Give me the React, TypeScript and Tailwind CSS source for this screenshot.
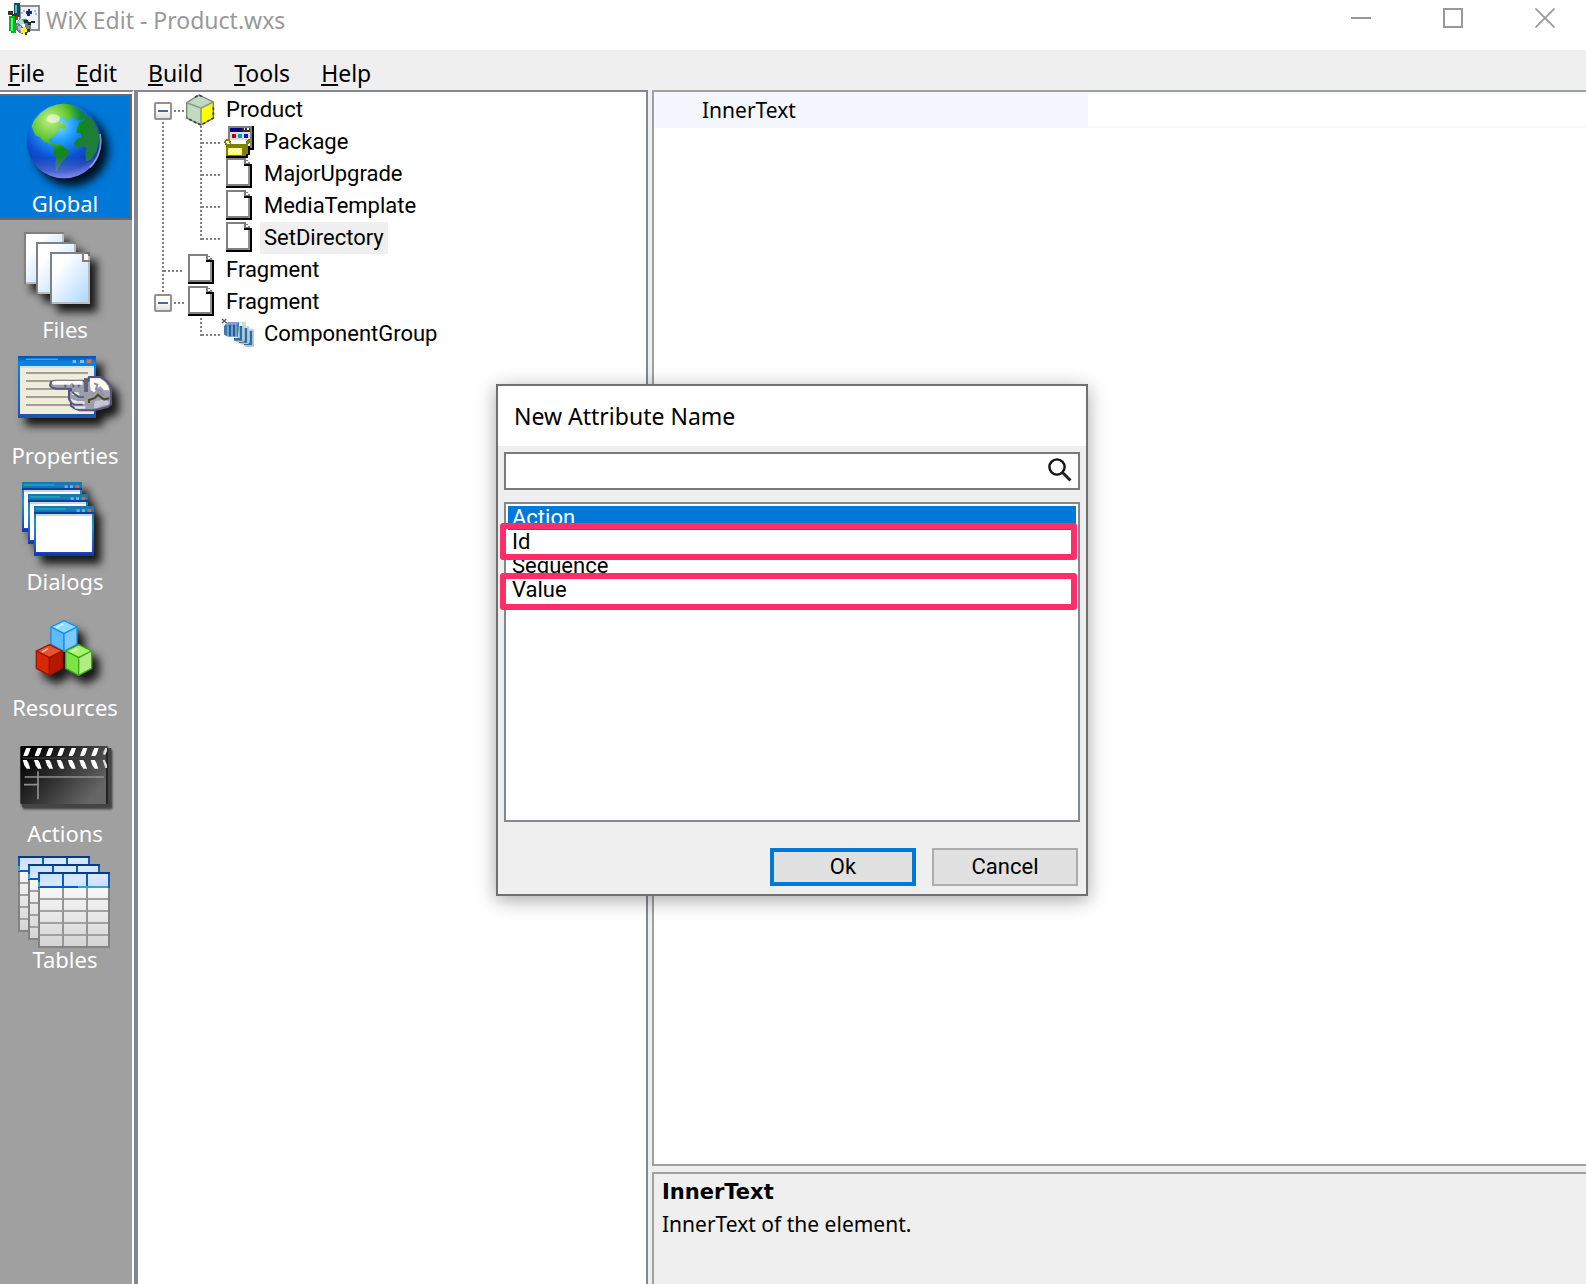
import React, { useState } from "react"

type IconProps = { className?: string }

type NavItem = {
  label: string
  Icon: React.ComponentType
}

type TreeNode = {
  label: string
  depth: number
  guide: "expander" | "tee" | "corner"
  // where the dotted line of the root level runs in this row
  rootLine: "none" | "top" | "bottom" | "full"
  Icon: React.ComponentType
}

/* ---------- title bar ---------- */

const AppLogo = () => (
  <svg viewBox="24 9 96 96" className="size-8 shrink-0" shapeRendering="crispEdges" aria-hidden="true">
    <rect x="57" y="14" width="63" height="80" fill="#8a8f96" />
    <rect x="63" y="20" width="50" height="68" fill="#f0f0f8" />
    <path d="M63 36h6v6h-6zM69 30h6v6h-6zM102 30h6v6h-6zM105 39h6v6h-6z" fill="#b4b4d8" />
    <path d="M78 33h5v-6h7v6h6v10h-6v5h-8v-5h-4z" fill="#10249c" />
    <path d="M42 9h19v42H42z" fill="#1c4a50" />
    <path d="M46 14h6v26h-6z" fill="#46c0d4" />
    <path d="M24 33h14v8h10v10H36v-7H24z" fill="#333" />
    <path d="M27 48h21v52H33v-6h-6z" fill="#06b424" />
    <path d="M32 54h6v40h-6z" fill="#48ff5c" />
    <path d="M46 48h8v12h-6v8h-4z" fill="#d81818" />
    <circle cx="70" cy="79" r="23" fill="#777b80" />
    <path d="M50 66l14-10 10 14-8 8z" fill="#7ef0dc" />
    <path d="M64 84l12-4 8 14-12 8-10-4z" fill="#f4f41e" />
    <path d="M52 76l12 2-2 14-8-4z" fill="#c9a2e8" />
    <rect x="66" y="72" width="9" height="9" fill="#fff" />
    <path d="M72 60h12v6h8v-4h12v6H92v8h-8v-6H72z" fill="#24282c" />
    <path d="M82 88h8v8h-8v8h-8v-8h8z" fill="#333" />
  </svg>
)

const MinimizeIcon = () => (
  <svg viewBox="0 0 20 20" className="size-5" shapeRendering="crispEdges" aria-hidden="true">
    <path d="M0 9h20v2H0z" fill="#999" />
  </svg>
)

const MaximizeIcon = () => (
  <svg viewBox="0 0 20 20" className="size-5" shapeRendering="crispEdges" aria-hidden="true">
    <rect x="1" y="1" width="18" height="18" fill="none" stroke="#999" strokeWidth="2" />
  </svg>
)

const CloseIcon = () => (
  <svg viewBox="0 0 20 20" className="size-5" aria-hidden="true">
    <path d="M.5.5l19 19M19.5.5l-19 19" stroke="#999" strokeWidth="1.7" />
  </svg>
)

/* ---------- sidebar icons ---------- */

const NAV_ICON = "block h-24 w-[130px]"
const SHADOW = "drop-shadow-[7px_8px_4px_rgba(0,0,0,0.85)]"

const GlobeIcon = () => (
  <svg viewBox="0 18 390 288" className={`${NAV_ICON} ${SHADOW}`} aria-hidden="true">
    <defs>
      <radialGradient id="sea" cx="0.42" cy="0.28" r="0.75">
        <stop offset="0" stopColor="#7fe0ff" />
        <stop offset="0.3" stopColor="#1f9dff" />
        <stop offset="0.62" stopColor="#0d4fd0" />
        <stop offset="0.85" stopColor="#1238ac" />
        <stop offset="1" stopColor="#5a72dc" />
      </radialGradient>
      <radialGradient id="land" gradientUnits="userSpaceOnUse" cx="150" cy="90" r="125">
        <stop offset="0" stopColor="#c4f08c" />
        <stop offset="0.45" stopColor="#62c830" />
        <stop offset="0.75" stopColor="#118a10" />
        <stop offset="1" stopColor="#1d7d3a" />
      </radialGradient>
      <linearGradient id="rim" x1="0" y1="0" x2="0" y2="1">
        <stop offset="0.72" stopColor="#6a7cf0" stopOpacity="0" />
        <stop offset="1" stopColor="#8c92f0" stopOpacity="0.8" />
      </linearGradient>
    </defs>
    <circle cx="192" cy="153" r="112" fill="url(#sea)" />
    <g fill="url(#land)">
      <path d="M95 108l8-18 18-20 22-16 26-10 20-3 22 2 10 8 2 18-14 20-12 2-10-10-10 6 8 14 12 4-2 12-14-2-12 14-10 12-12 6 4 10 14 6 8 8-10-2-16-8-16-6-12-14-12-4-8-16z" />
      <path d="M160 168l14-6 12 4 8 8 14 8-6 16-8 10-10 12-8 12-2 12h-6l-2-22 2-18-8-18z" />
      <path d="M196 44l32 8 22 14 8 14-14 12-20-4-8-18z" opacity="0.85" />
      <path d="M230 116l8-18 14-6 4-12 12-2 16 20 10 22 4 30-8 34-18 26-14 4-2-22 4-18-14-6-18 6-6-14 8-12 14-6-2-14-12 2z" />
    </g>
    <ellipse cx="160" cy="86" rx="20" ry="13" fill="#fff" opacity="0.55" />
    <circle cx="192" cy="153" r="112" fill="url(#rim)" />
    <path d="M270 232a112 112 0 0 0 30-100" fill="none" stroke="#b0a8dc" strokeWidth="5" opacity="0.8" />
  </svg>
)

const FilesIcon = () => (
  <svg viewBox="0 396 390 288" className={`${NAV_ICON} ${SHADOW}`} aria-hidden="true">
    <defs>
      <linearGradient id="sheet" x1="0" y1="0" x2="1" y2="1">
        <stop offset="0.25" stopColor="#fff" />
        <stop offset="1" stopColor="#acd6ff" />
      </linearGradient>
    </defs>
    {[
      [72, 426],
      [108, 456],
      [150, 486],
    ].map(([x, y]) => (
      <g key={x} transform={`translate(${x} ${y})`}>
        <path d="M3 3h114v150H3z" fill="url(#sheet)" stroke="#bcbcbc" strokeWidth="6" />
        <path d="M3 156V3h117" fill="none" stroke="#808080" strokeWidth="6" />
      </g>
    ))}
    <path d="M252 492h12v18h-12z" fill="#fff" />
    <path d="M249 486v27h21" fill="none" stroke="#808080" strokeWidth="6" />
    <path d="M258 486h12v12h-6v-6h-6z" fill="#707070" />
  </svg>
)

const PropertiesIcon = () => (
  <svg viewBox="0 24 390 288" className={`${NAV_ICON} ${SHADOW}`} aria-hidden="true">
    <defs>
      <linearGradient id="frame" x1="0" y1="0" x2="0" y2="1">
        <stop offset="0" stopColor="#0a50a8" />
        <stop offset="0.1" stopColor="#0a84e8" />
        <stop offset="0.7" stopColor="#0a68d0" />
        <stop offset="1" stopColor="#2450a8" />
      </linearGradient>
    </defs>
    <rect x="54" y="48" width="234" height="186" fill="url(#frame)" />
    <rect x="60" y="78" width="222" height="144" fill="#efecdc" />
    <path d="M60 78h222v6H60z" fill="#c6e4f4" />
    <path d="M78 56h96v4H78z" fill="#4aa8f0" />
    <path d="M218 60h10v9h-10zM240 60h12v9h-12z" fill="#7cc0f4" />
    <path d="M260 58h15v11h-15z" fill="#e4684c" />
    <path d="M78 99h186M78 123h186M78 147h186M78 171h186M78 195h186" stroke="#a3a093" strokeWidth="6" />
    <path
      d="M267 111h33l12 6 10 8 8 12 3 14v42l-10 8-24 6-18 4h-42l-14-5-12-8v-12l-6-8v-26h6v-6h-46l-12-4-5-6 3-10 14-4h99v-8z"
      fill="#9d9dac"
      stroke="#55557c"
      strokeWidth="6"
      strokeLinejoin="round"
    />
    <path d="M156 125l10-3h82v12h-26l-6-6-6 6h-48l-6-2z" fill="#fffef4" />
    <path d="M196 134v8M220 134v8M236 134v8" stroke="#55557c" strokeWidth="5" />
    <path d="M252 114h12v42h-12z" fill="#62627c" />
    <path d="M270 115h30l14 10 10 12 4 14h-16l-10-12-10 4-8 14-12-6-2-14z" fill="#fffef4" />
    <path d="M282 130l10 4-4 14 10 2M300 152l12 14" fill="none" stroke="#8c8ca0" strokeWidth="6" />
    <path d="M214 156h20l6 9h-24zM212 176l22 8h20v8h-36zM222 199h34v7h-30z" fill="#e6e6ec" />
    <path d="M216 156l20 15h16M210 186l14 8h24" fill="none" stroke="#55557c" strokeWidth="5" />
    <path d="M284 184l20-4 22 4v10l-16 2-20 8h-8z" fill="#c6c6d2" />
    <path d="M267 189v-9l18-6 9-10 9 8 9 6 16-3" fill="none" stroke="#4c4820" strokeWidth="6" />
  </svg>
)

const DialogsIcon = () => (
  <svg viewBox="0 402 390 288" className={`${NAV_ICON} ${SHADOW}`} aria-hidden="true">
    <defs>
      <linearGradient id="dlgside" x1="0" y1="0" x2="0" y2="1">
        <stop offset="0" stopColor="#1878a8" />
        <stop offset="0.4" stopColor="#2090d0" />
        <stop offset="1" stopColor="#2038c0" />
      </linearGradient>
    </defs>
    {[
      [66, 426],
      [84, 462],
      [102, 498],
    ].map(([x, y]) => (
      <g key={x} transform={`translate(${x} ${y})`}>
        <rect width="180" height="149" fill="url(#dlgside)" />
        <rect x="6" y="24" width="168" height="114" fill="#fff" />
        <path d="M6 24h120v6H6z" fill="#c4dcc4" />
        <path d="M126 24h48v6h-48z" fill="#c8d8ff" />
        <path d="M6 6h90v5H6z" fill="#18a0c8" />
        <path d="M0 17h180v7H0z" fill="#0840a8" />
        <path d="M128 10h9v8h-9zM144 10h9v8h-9z" fill="#68b4e0" />
        <path d="M160 9h12v9h-12z" fill="#e0603c" />
        <path d="M0 143h180v6H0z" fill="#103c98" />
      </g>
    ))}
  </svg>
)

type CubeProps = { x: number; y: number; top: string; left: string; right: string; edge: string }

const Cube = ({ x, y, top, left, right, edge }: CubeProps) => (
  <g transform={`translate(${x} ${y})`} stroke={edge} strokeWidth="4" strokeLinejoin="round">
    <path d="M41 2l39 19-39 20L2 21z" fill={top} />
    <path d="M2 21l39 20v53L2 73z" fill={left} />
    <path d="M80 21L41 41v53l39-21z" fill={right} />
  </g>
)

const ResourcesIcon = () => (
  <svg viewBox="0 0 390 288" className={`${NAV_ICON} ${SHADOW}`} aria-hidden="true">
    <Cube x={151} y={60} top="#8cdcff" left="#5cbcfc" right="#7cc8ff" edge="#1c8cec" />
    <Cube x={107} y={132} top="#e85030" left="#d82808" right="#b41800" edge="#9c1400" />
    <Cube x={195} y={132} top="#a4f46c" left="#7ce444" right="#b4ec84" edge="#40a41c" />
    <path d="M168 84l22-12M126 156l18-10M214 156l18-10" stroke="#fff" strokeWidth="5" opacity="0.6" />
  </svg>
)

const ActionsIcon = () => (
  <svg
    viewBox="0 378 390 288"
    className={`${NAV_ICON} drop-shadow-[1px_2px_1px_rgba(0,0,0,0.6)]`}
    aria-hidden="true"
  >
    <defs>
      <linearGradient id="slate" x1="0" y1="0" x2="1" y2="0.6">
        <stop offset="0.1" stopColor="#000" />
        <stop offset="1" stopColor="#666" />
      </linearGradient>
    </defs>
    <path d="M66 444h268v178H66z" fill="#444" />
    <rect x="61" y="438" width="263" height="174" rx="4" fill="url(#slate)" />
    <path d="M318 444h6v168h-6z" fill="#222" />
    <path d="M68 474h252" stroke="#444" strokeWidth="3" />
    {[72, 106, 140, 174, 208, 242, 276].map((x) => (
      <g key={x} fill="#fff">
        <path d={`M${x + 7} 444h13l-6 18-4 6h-12l3-10z`} />
        <path d={`M${x - 4} 480h12l5 8 6 18h-11l-7-10z`} />
      </g>
    ))}
    <path d="M316 444h5v10l-5 10h-6v-8zM308 480h6l7 14v10h-5z" fill="#ddd" />
    <path d="M74 531h238M72 554h42M114 514v84" stroke="#909090" strokeWidth="5" />
  </svg>
)

const TablesIcon = () => (
  <svg viewBox="0 96 390 288" className={NAV_ICON} shapeRendering="crispEdges" aria-hidden="true">
    <defs>
      <linearGradient id="cells" x1="0" y1="0" x2="0" y2="1">
        <stop offset="0" stopColor="#f8f8f8" />
        <stop offset="1" stopColor="#d4d4d4" />
      </linearGradient>
      <linearGradient id="head" x1="0" y1="0" x2="1" y2="1">
        <stop offset="0" stopColor="#c4dcff" />
        <stop offset="0.5" stopColor="#dce8ff" />
        <stop offset="1" stopColor="#c8dcff" />
      </linearGradient>
    </defs>
    {[
      [54, 108],
      [84, 132],
      [114, 156],
    ].map(([x, y]) => (
      <g key={x} transform={`translate(${x} ${y})`} fill="none" strokeWidth="6">
        <rect x="3" y="45" width="210" height="180" fill="url(#cells)" stroke="#828282" />
        <path d="M6 81h204M6 117h204M6 153h204M6 189h204" stroke="#a0a0a0" />
        <path d="M75 48v174M147 48v174" stroke="#969696" />
        <rect x="3" y="3" width="210" height="42" fill="url(#head)" stroke="#0a5cc0" />
        <path d="M75 3v42M147 3v42" stroke="#0a5cc0" />
        <path d="M0 3h216" stroke="#083c80" />
        <path d="M120 45h90M3 30v15" stroke="#3ca0cc" />
      </g>
    ))}
  </svg>
)

/* ---------- tree icons ---------- */

const TREE_ICON = "size-8 overflow-visible"

const ProductIcon = () => (
  <svg viewBox="0 0 96 96" className={TREE_ICON} aria-hidden="true">
    <path d="M42 3l43 21-37 18L5 26z" fill="#c0dcc0" />
    <path d="M5 26l43 16v51L5 72z" fill="#c0dcc0" />
    <path d="M48 42l37-18v48L48 93z" fill="#ff0" />
    <path d="M5 26L42 3l43 21v48L48 93 5 72z" fill="none" stroke="#808080" strokeWidth="4" />
    <path d="M5 26l43 16 37-18M48 42v51" fill="none" stroke="#8c9c8c" strokeWidth="5" />
    <path d="M30 10L42 3l12 6M85 40v32L48 93 5 72" fill="none" stroke="#404040" strokeWidth="5" strokeDasharray="9 6" />
  </svg>
)

const PackageIcon = () => (
  <svg viewBox="0 0 96 96" className={TREE_ICON} shapeRendering="crispEdges" aria-hidden="true">
    <path d="M15 0h78v72H15z" fill="#000" />
    <path d="M15 0h72v66H15z" fill="#808080" />
    <path d="M21 6h60v54H21z" fill="#fff" />
    <path d="M21 6h36v12H21z" fill="#000080" />
    <path d="M57 6h24v12H57z" fill="#303030" />
    <path d="M63 6h4v6h-4zM73 6h4v6h-4z" fill="#fff" />
    <path d="M21 18h60v24H21z" fill="#dcdcdc" />
    <path d="M27 24h12v12H27z" fill="#c00010" />
    <path d="M45 24h12v12H45z" fill="#00a0a0" />
    <path d="M63 24h12v12H63z" fill="#1010d0" />
    <path d="M3 48l6-9h10l5 9h44l8-9h6v9l-6 6-4 12H20L8 58z" fill="#808000" />
    <path d="M9 45h9v6l6 3h-9l-6-3z" fill="#ffffc0" />
    <path d="M24 48h45v6H24z" fill="#fff" />
    <path d="M9 60h66v30H9z" fill="#808000" />
    <path d="M15 66h42v21H15z" fill="#ffff50" />
    <path
      d="M21 66h6v6h-6zM33 66h6v6h-6zM45 66h6v6h-6zM15 72h6v6h-6zM27 72h6v6h-6zM39 72h6v6h-6zM51 72h6v6h-6zM21 78h6v6h-6zM33 78h6v6h-6zM45 78h6v6h-6z"
      fill="#fffff0"
    />
    <path d="M9 90h60v-6h6V60h6v28h-6v8H9z" fill="#000" />
  </svg>
)

const PageIcon = () => (
  <svg viewBox="0 0 96 96" className={TREE_ICON} shapeRendering="crispEdges" aria-hidden="true">
    <path d="M9 0h60v6h6v6h6v6h6v72H9z" fill="#000" />
    <path d="M9 0h60v6h6v6h6v72H9z" fill="#808080" />
    <path d="M15 6h48v18h18v54H15z" fill="#fff" />
    <path d="M75 24h6v60h-6z" fill="#909090" />
    <path d="M63 6h6v12h-6z" fill="#808080" />
    <path d="M63 18h18v6H63z" fill="#000" />
    <path d="M69 9h6v6h-6z" fill="#fff" />
  </svg>
)

const ComponentGroupIcon = () => (
  <svg viewBox="0 0 96 96" className={TREE_ICON} aria-hidden="true">
    <path d="M-3 3l14 12M-3 15L10 3" stroke="#506070" strokeWidth="4" fill="none" />
    <path d="M45 24h12v-9h-6v-3h18v12h10v8h14v54H70v-6H55v-6H40z" fill="#c4e0d4" />
    <path d="M3 24l12-12h34l-4 44H15L3 50z" fill="#3c78b4" />
    <path d="M9 18l9-6h30l-6 9H9z" fill="#8c9ccc" />
    <path d="M15 22v34M27 22v34M39 22v34" stroke="#9cd0e8" strokeWidth="3" />
    <path d="M21 20v34M33 20v34" stroke="#183c78" strokeWidth="3" />
    <path d="M54 24v40H33M69 30v42H48M84 38v40H63" stroke="#2c6cac" strokeWidth="8" fill="none" />
    <path d="M60 22v48H39M75 28v48H54M90 36v49H66" stroke="#b8c4cc" strokeWidth="4" fill="none" />
  </svg>
)

/* ---------- data ---------- */

const menus = ["File", "Edit", "Build", "Tools", "Help"]

const navItems: NavItem[] = [
  { label: "Global", Icon: GlobeIcon },
  { label: "Files", Icon: FilesIcon },
  { label: "Properties", Icon: PropertiesIcon },
  { label: "Dialogs", Icon: DialogsIcon },
  { label: "Resources", Icon: ResourcesIcon },
  { label: "Actions", Icon: ActionsIcon },
  { label: "Tables", Icon: TablesIcon },
]

const nodes: TreeNode[] = [
  { label: "Product", depth: 0, guide: "expander", rootLine: "bottom", Icon: ProductIcon },
  { label: "Package", depth: 1, guide: "tee", rootLine: "full", Icon: PackageIcon },
  { label: "MajorUpgrade", depth: 1, guide: "tee", rootLine: "full", Icon: PageIcon },
  { label: "MediaTemplate", depth: 1, guide: "tee", rootLine: "full", Icon: PageIcon },
  { label: "SetDirectory", depth: 1, guide: "corner", rootLine: "full", Icon: PageIcon },
  { label: "Fragment", depth: 0, guide: "tee", rootLine: "full", Icon: PageIcon },
  { label: "Fragment", depth: 0, guide: "expander", rootLine: "top", Icon: PageIcon },
  { label: "ComponentGroup", depth: 1, guide: "corner", rootLine: "none", Icon: ComponentGroupIcon },
]

const attributes = ["Action", "Id", "Sequence", "Value"]

/* ---------- tree ---------- */

const linePaths = {
  none: "",
  top: "M19 0v8",
  bottom: "M19 28v4",
  full: "M19 0v32",
}

const branchPaths = {
  tee: "M19 0v32M20 17h20",
  corner: "M19 0v18M20 17h20",
}

const Guide = ({ d }: { d: string }) => (
  <svg viewBox="0 0 38 32" className="h-8 w-[38px] shrink-0 overflow-visible" shapeRendering="crispEdges" aria-hidden="true">
    <path d={d} fill="none" stroke="#808080" strokeWidth="2" strokeDasharray="2 2" />
  </svg>
)

const Expander = ({ d }: { d: string }) => (
  <svg viewBox="0 0 38 32" className="h-8 w-[38px] shrink-0 overflow-visible" aria-hidden="true">
    <defs>
      <linearGradient id="knob" x1="0" y1="0" x2="0" y2="1">
        <stop offset="0.4" stopColor="#fff" />
        <stop offset="1" stopColor="#dcdcdc" />
      </linearGradient>
    </defs>
    <path d={d} fill="none" stroke="#808080" strokeWidth="2" strokeDasharray="2 2" />
    <path d="M30 17h10" stroke="#808080" strokeWidth="2" strokeDasharray="2 2" />
    <rect x="11" y="9" width="16" height="16" rx="1" fill="url(#knob)" stroke="#919191" strokeWidth="2" />
    <path d="M14 17h10" stroke="#4b63a7" strokeWidth="2" />
  </svg>
)

const TreeRow = ({ node, selected, onSelect }: { node: TreeNode; selected: boolean; onSelect: () => void }) => (
  <li role="treeitem" aria-selected={selected} className="flex h-8 items-center" onClick={onSelect}>
    {node.guide === "expander" ? (
      <Expander d={linePaths[node.rootLine]} />
    ) : (
      <Guide d={node.depth === 0 ? branchPaths.tee : linePaths[node.rootLine]} />
    )}
    {node.depth === 1 && node.guide !== "expander" && <Guide d={branchPaths[node.guide]} />}
    <span className="relative flex w-[38px] shrink-0 justify-center">
      <node.Icon />
    </span>
    <span className={`ml-0.5 h-8 px-1 leading-8 ${selected ? "bg-[#efefef]" : ""}`}>{node.label}</span>
  </li>
)

/* ---------- dialog ---------- */

const SearchIcon = ({ className }: IconProps) => (
  <svg viewBox="0 0 24 24" className={className} aria-hidden="true">
    <circle cx="9" cy="9" r="7.6" fill="none" stroke="#111" strokeWidth="2.4" />
    <path d="M14.5 14.5l8 8" stroke="#222" strokeWidth="3" />
  </svg>
)

const NewAttributeDialog = () => {
  const [query, setQuery] = useState("")
  const [picked, setPicked] = useState("Action")

  return (
    <div
      role="dialog"
      aria-labelledby="dialog-title"
      className="w-[592px] border-2 border-[#707070] bg-[#efefef] shadow-[0_4px_18px_rgba(0,0,0,0.35)]"
    >
      <h2 id="dialog-title" className="h-[60px] bg-white px-4 font-['Noto_Sans',sans-serif] text-[23px] leading-[60px]">
        New Attribute Name
      </h2>
      <div className="px-1.5 pt-1.5 pb-2">
        <div className="relative">
          <input
            type="text"
            aria-label="Attribute name"
            value={query}
            onChange={(e) => setQuery(e.target.value)}
            className="block h-[38px] w-full border-2 border-[#7a7a7a] bg-white pr-9 pl-1.5 outline-none"
          />
          <SearchIcon className="absolute top-1.5 right-2 size-6" />
        </div>
        <div className="relative mt-3 h-80 border-2 border-[#828790] bg-white p-0.5">
          <ul role="listbox" aria-label="Attributes">
            {attributes.map((name) => (
              <li
                key={name}
                role="option"
                aria-selected={name === picked}
                onClick={() => setPicked(name)}
                className={`h-6 px-1 leading-6 ${name === picked ? "bg-[#0078d7] text-white" : ""}`}
              >
                {name}
              </li>
            ))}
          </ul>
          <div className="pointer-events-none absolute top-[19px] right-px -left-1.5 h-[37px] rounded-[3px] border-6 border-[#ff2e6b]" />
          <div className="pointer-events-none absolute top-[69px] right-px -left-1.5 h-[37px] rounded-[3px] border-6 border-[#ff2e6b]" />
        </div>
        <div className="mt-[26px] flex justify-end gap-4 pr-0.5">
          <button className="h-[38px] w-[146px] border-4 border-[#0078d7] bg-[#e1e1e1] leading-6">Ok</button>
          <button className="h-[38px] w-[146px] border-2 border-[#adadad] bg-[#e1e1e1] leading-6">Cancel</button>
        </div>
      </div>
    </div>
  )
}

const App = () => {
  const [section, setSection] = useState("Global")
  const [current, setCurrent] = useState(4)

  return (
    <div className="relative flex min-h-screen flex-col overflow-hidden bg-[#efefef] font-['Roboto',sans-serif] text-[22px] text-black">
      <header className="flex h-[50px] items-start bg-white pr-[31px] pl-2 font-['Noto_Sans',sans-serif]">
        <div className="flex items-start gap-1.5 pt-[3px]">
          <AppLogo />
          <h1 className="text-[23px] leading-[34px] text-[#999]">WiX Edit - Product.wxs</h1>
        </div>
        <div className="ml-auto flex gap-[72px] pt-2">
          <button aria-label="Minimize">
            <MinimizeIcon />
          </button>
          <button aria-label="Maximize">
            <MaximizeIcon />
          </button>
          <button aria-label="Close">
            <CloseIcon />
          </button>
        </div>
      </header>

      <nav className="flex h-10 items-end gap-[31px] pl-2 font-['Noto_Sans',sans-serif] text-[23px]">
        {menus.map((menu) => (
          <button key={menu} className="leading-[34px]">
            <span className="underline decoration-2 underline-offset-2">{menu[0]}</span>
            {menu.slice(1)}
          </button>
        ))}
      </nav>

      <div className="flex flex-1">
        <aside className="w-[134px] shrink-0 border-t-2 border-r-2 border-t-[#828790] border-r-white bg-[#a0a0a0] font-['Noto_Sans',sans-serif] text-[22px] text-white">
          <div className="border-t-2 border-white">
            {navItems.map(({ label, Icon }) => (
              <button
                key={label}
                onClick={() => setSection(label)}
                className={`flex h-[126px] w-full flex-col border-y-2 border-r-2 ${
                  section === label ? "border-[#696969] bg-[#0078d7]" : "border-transparent"
                }`}
              >
                <Icon />
                <span className="w-full text-center leading-[22px]">{label}</span>
              </button>
            ))}
          </div>
        </aside>

        <ul
          role="tree"
          className="w-[514px] shrink-0 border-t-2 border-r-2 border-l-4 border-[#828790] bg-white pt-0.5 pl-1.5"
        >
          {nodes.map((node, i) => (
            <TreeRow key={i} node={node} selected={i === current} onSelect={() => setCurrent(i)} />
          ))}
        </ul>

        <main className="ml-1 flex min-w-0 flex-1 flex-col font-['Noto_Sans',sans-serif] text-[21px]">
          <div className="flex-1 border-y-2 border-l-2 border-[#a0a0a0] bg-white">
            <table className="w-full border-collapse">
              <tbody>
                <tr className="border-y-2 border-[#f5f7ff]">
                  <th scope="row" className="h-8 w-[434px] bg-[#f5f7ff] pl-12 text-left leading-8 font-normal">
                    InnerText
                  </th>
                  <td />
                </tr>
              </tbody>
            </table>
          </div>
          <section className="mt-1.5 h-28 border-t-2 border-l-2 border-[#a0a0a0] px-2 pt-0.5 leading-8">
            <h2 className="font-['DejaVu_Sans',sans-serif] font-bold">InnerText</h2>
            <p>InnerText of the element.</p>
          </section>
        </main>
      </div>

      <div className="absolute inset-0 grid place-items-center pr-0.5 pb-1">
        <NewAttributeDialog />
      </div>
    </div>
  )
}

export default App
